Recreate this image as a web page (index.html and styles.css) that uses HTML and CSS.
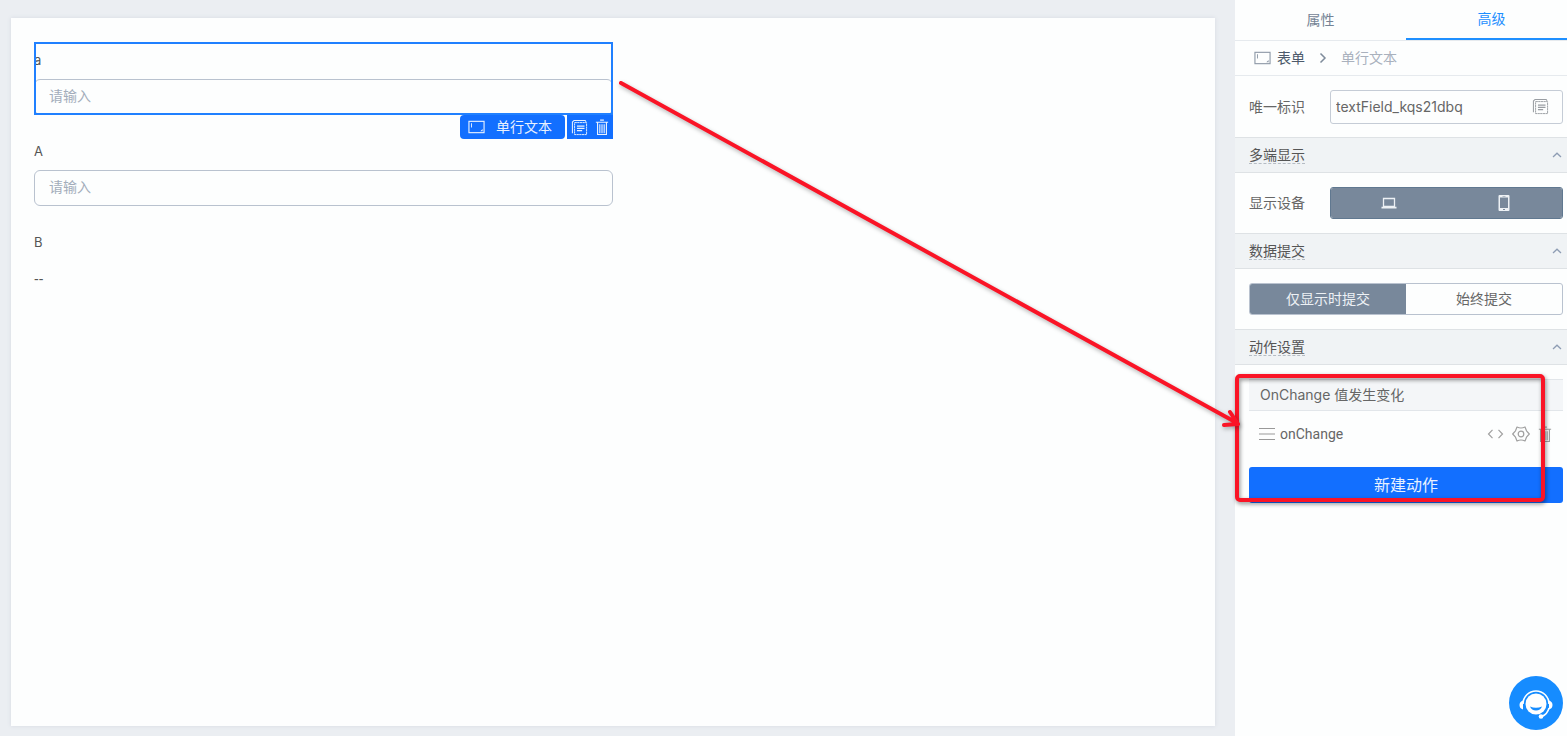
FILE: index.html
```html
<!DOCTYPE html>
<html lang="zh-CN">
<head>
<meta charset="utf-8">
<title>表单设计器</title>
<link rel="stylesheet" href="styles.css">
</head>
<body>
<svg class="symbols" aria-hidden="true">
  <symbol id="icon-field" viewBox="0 0 18 14">
    <rect x="1" y="1" width="16" height="12" fill="none" stroke="currentColor" stroke-width="1.2"/>
    <path d="M3.7 3v4.5" stroke="currentColor" stroke-width="1"/>
    <path d="M15.500 9v2.500h-2.500z" fill="currentColor"/>
  </symbol>
  <symbol id="icon-copy" viewBox="0 0 18 18">
    <path d="M1.5 15V3.2L3.2 1.5H15L16 3" fill="none" stroke="currentColor" stroke-width="1.1"/>
    <rect x="3.8" y="3.8" width="12.7" height="12.7" fill="none" stroke="currentColor" stroke-width="1" stroke-dasharray="2.4 .4"/>
    <path d="M6.3 7.5h8M6.3 9.9h8M6.3 12.3h5.5" stroke="currentColor" stroke-width="1.3"/>
  </symbol>
  <symbol id="icon-trash" viewBox="0 0 14 18">
    <path d="M.5 3.5h13M5 1.2h4M2.3 4v12.4h9.4V4M4.7 5.5v9.5M7 5.5v9.5M9.3 5.5v9.5" fill="none" stroke="currentColor" stroke-width="1.2"/>
  </symbol>
  <symbol id="icon-up" viewBox="0 0 10 6">
    <path d="M1 5l4-3.8L9 5" fill="none" stroke="currentColor" stroke-width="1.3"/>
  </symbol>
</svg>

<div class="app">
  <main class="stage">
    <form class="paper">
      <div class="field field-selected">
        <label class="field-label" for="field-a">a</label>
        <input class="field-input" id="field-a" type="text" placeholder="请输入">
        <div class="field-tools">
          <button class="tool-name" type="button"><svg class="icon-field"><use href="#icon-field"/></svg>单行文本</button>
          <div class="tool-actions">
            <button class="icon-button" type="button" aria-label="复制"><svg class="icon-copy"><use href="#icon-copy"/></svg></button>
            <button class="icon-button" type="button" aria-label="删除"><svg class="icon-trash"><use href="#icon-trash"/></svg></button>
          </div>
        </div>
      </div>
      <div class="field">
        <label class="field-label" for="field-A">A</label>
        <input class="field-input" id="field-A" type="text" placeholder="请输入">
      </div>
      <div class="field">
        <span class="field-label">B</span>
        <span class="field-value">--</span>
      </div>
    </form>
  </main>

  <aside class="panel">
    <div class="tabs" role="tablist">
      <button class="tab" type="button" role="tab" aria-selected="false">属性</button>
      <button class="tab tab-active" type="button" role="tab" aria-selected="true">高级</button>
    </div>
    <nav class="crumbs">
      <a class="crumb-link" href="#form"><svg class="icon-field"><use href="#icon-field"/></svg>表单</a>
      <svg class="crumb-sep" viewBox="0 0 8 12"><path d="M1.5 1.5L6 6l-4.5 4.5" fill="none" stroke="currentColor" stroke-width="1.5"/></svg>
      <span class="crumb-current">单行文本</span>
    </nav>
    <div class="row row-id">
      <label class="row-label" for="unique-id">唯一标识</label>
      <div class="id-box">
        <input class="id-input" id="unique-id" type="text" value="textField_kqs21dbq">
        <button class="icon-button" type="button" aria-label="复制标识"><svg class="icon-copy"><use href="#icon-copy"/></svg></button>
      </div>
    </div>

    <button class="section-head" type="button"><span class="section-title">多端显示</span><svg class="icon-up"><use href="#icon-up"/></svg></button>
    <div class="row">
      <span class="row-label">显示设备</span>
      <div class="segments">
        <button class="segment segment-on" type="button" aria-label="电脑">
          <svg class="icon-device" viewBox="0 0 16 16"><path d="M2.5 3.5h11v8h-11z" fill="none" stroke="currentColor" stroke-width="1.3"/><path d="M.5 12.7h15" stroke="currentColor" stroke-width="1.8"/></svg>
        </button>
        <button class="segment segment-on" type="button" aria-label="手机">
          <svg class="icon-device" viewBox="0 0 16 16"><path fill-rule="evenodd" d="M3.5 0h9q1 0 1 1v14q0 1-1 1h-9q-1 0-1-1V1q0-1 1-1zM4 2.5v10.5h8V2.5zM7 14h2v1H7zM6.5 1h3v.5h-3z" fill="currentColor"/></svg>
        </button>
      </div>
    </div>

    <button class="section-head" type="button"><span class="section-title">数据提交</span><svg class="icon-up"><use href="#icon-up"/></svg></button>
    <div class="row">
      <div class="segments">
        <button class="segment segment-on" type="button">仅显示时提交</button>
        <button class="segment" type="button">始终提交</button>
      </div>
    </div>

    <button class="section-head" type="button"><span class="section-title">动作设置</span><svg class="icon-up"><use href="#icon-up"/></svg></button>
    <section class="actions">
      <h3 class="event-name">OnChange 值发生变化</h3>
      <div class="action-item">
        <svg class="icon-drag" viewBox="0 0 16 12"><path d="M0 .5h16M0 6h16M0 11.500h16" stroke="currentColor"/></svg>
        <span class="action-name">onChange</span>
        <button class="icon-button" type="button" aria-label="编辑代码"><svg class="icon-code" viewBox="0 0 16 10"><path d="M5 .8L1 5l4 4.2M11 .8L15 5l-4 4.2" fill="none" stroke="currentColor" stroke-width="1.2"/></svg></button>
        <button class="icon-button" type="button" aria-label="设置"><svg class="icon-gear" viewBox="0 0 18 18"><path d="M5 2Q9 4 13 2L14.500 5.800 17.300 9 14.500 12.200 13 16Q9 14 5 16L3.500 12.200.7 9 3.500 5.800z" fill="none" stroke="currentColor" stroke-width="1.200" stroke-linejoin="round"/><circle cx="9" cy="9" r="2.800" fill="none" stroke="currentColor" stroke-width="1.200"/></svg></button>
        <button class="icon-button" type="button" aria-label="删除动作"><svg class="icon-trash"><use href="#icon-trash"/></svg></button>
      </div>
      <button class="add-action" type="button">新建动作</button>
      <div class="callout-box"></div>
    </section>
  </aside>
</div>

<svg class="callout-arrow" viewBox="0 0 640 360" aria-hidden="true">
  <path d="M11 8L627 348M620 337l8 12-14 1" fill="none" stroke="#fa1426" stroke-width="4" stroke-linecap="round" stroke-linejoin="round"/>
</svg>

<button class="support" type="button" aria-label="在线客服">
  <svg class="icon-support" viewBox="0 0 54 54">
    <path d="M14 28a13 13 0 0 1 26 0" fill="none" stroke="#fff" stroke-width="1.6"/>
    <circle cx="27" cy="28" r="10.5" fill="#fff"/>
    <path d="M21 30.5q6 2.6 12 0-1.5 4-6 4t-6-4z" fill="#168cff"/>
    <path d="M14 24.5v9q-3.5-1-3.500-4.500t3.500-4.500zM40 24.500v9q3.500-1 3.500-4.500t-3.500-4.500z" fill="#fff"/>
    <path d="M40 32q-1.500 6-7 8.500" fill="none" stroke="#fff" stroke-width="1.500"/>
    <circle cx="32" cy="40.500" r="2.300" fill="#fff"/>
  </svg>
</button>
</body>
</html>
```
FILE: styles.css
```css
* { box-sizing: border-box; }

body {
  margin: 0;
  background: #ebeef2;
  color: #666;
  font: 14px/20px Inter, "Noto Sans CJK SC", sans-serif;
}

button, input { font: inherit; color: inherit; }

button {
  display: flex;
  align-items: center;
  justify-content: center;
  padding: 0;
  border: 0;
  background: none;
  cursor: pointer;
}

.symbols { display: none; }

.app { display: flex; min-height: 100vh; }

.stage { display: flex; flex: 1; padding: 18px 20px 10px 11px; }

.paper {
  display: grid;
  flex: 1;
  grid-template-columns: 1fr 1fr;
  align-content: start;
  row-gap: 18px;
  padding: 24px 23px;
  background: #fdfefe;
  box-shadow: 0 0 4px #d5d9e2;
}

.field { position: relative; display: flex; flex-direction: column; grid-column: 1; }

.field-selected::after {
  content: "";
  position: absolute;
  inset: 0;
  border: 2px solid #2080ff;
  pointer-events: none;
}

.field-label { line-height: 37px; font-size: 13px; color: #555; }
.field-value { line-height: 36px; color: #555; font-family: "Liberation Sans", sans-serif; }

.field-input {
  width: 100%;
  height: 36px;
  padding: 0 14px 4px;
  border: 1px solid #b9c2cf;
  border-radius: 6px;
  background: none;
}

.field-input::placeholder { color: #a3adbb; }

.field-tools {
  position: absolute;
  top: 100%;
  right: 0;
  display: flex;
  gap: 2px;
  color: #e8f1ff;
}

.tool-name { gap: 11px; height: 24px; padding: 0 13px 0 8px; border-radius: 4px; background: #126fff; }
.tool-actions { display: flex; gap: 7px; height: 24px; padding: 0 4px; background: #126fff; }

.icon-field { width: 17px; height: 14px; }
.icon-copy { width: 17px; height: 17px; }
.icon-trash { width: 14px; height: 17px; }
.icon-up { width: 10px; height: 6px; color: #8e9db4; }
.icon-drag { width: 16px; height: 12px; color: #999; }
.icon-code { width: 17px; height: 10px; }
.icon-gear { width: 18px; height: 18px; }
.icon-device { width: 16px; height: 16px; }

.panel { flex: 0 0 332px; min-width: 0; background: #fdfefe; }

.tabs { display: flex; height: 41px; border-bottom: 1px solid #e6eaee; overflow: hidden; }
.tab { flex: 0 0 171px; height: 40px; color: #748395; }
.tab-active { border-bottom: 2px solid #1e8fff; color: #1e8fff; }

.crumbs {
  display: flex;
  align-items: center;
  gap: 14px;
  height: 35px;
  padding-left: 19px;
  border-bottom: 1px solid #e6eaee;
}

.crumb-link { display: flex; align-items: center; gap: 6px; color: #4c5a6b; text-decoration: none; }
.crumb-link .icon-field { color: #8f9aa8; }
.crumb-sep { width: 8px; height: 12px; color: #7f8b9b; }
.crumb-current { color: #a9b1bd; }

.row { display: flex; align-items: center; height: 60px; padding: 0 4px 0 14px; }
.row-id { height: 61px; }
.row-label { flex: 0 0 81px; }

.id-box {
  display: flex;
  flex: 1;
  min-width: 0;
  height: 34px;
  padding-right: 13px;
  border: 1px solid #c5ccd6;
  border-radius: 3px;
  color: #999da2;
}

.id-input { flex: 1; min-width: 0; padding: 0 5px; border: 0; background: none; color: #666; }

.section-head {
  justify-content: space-between;
  width: 100%;
  height: 36px;
  padding: 0 5px 0 14px;
  border-top: 1px solid #dee2e5;
  border-bottom: 1px solid #dee2e5;
  background: #f0f3f5;
}

.section-title { border-bottom: 1px dashed #b5bcc4; line-height: 16px; color: #555; }

.segments {
  display: flex;
  flex: 1;
  height: 32px;
  border: 1px solid #b9c2cf;
  border-radius: 3px;
  overflow: hidden;
}

.segment { flex: 1; }
.segment-on { background: #78889b; color: #edf1f5; }
.segments:has(.segment-on:last-child) { border-color: #607890; }

.actions { position: relative; padding: 14px 4px 0 14px; }

.event-name {
  margin: 0;
  padding: 0 11px;
  border-top: 1px solid #e2e6ea;
  border-bottom: 1px solid #e2e6ea;
  background: #f4f6f8;
  font-size: 14px;
  font-weight: 400;
  line-height: 30px;
}

.action-item { display: flex; align-items: center; gap: 8px; height: 46px; padding: 0 11px 0 10px; color: #a0a0a0; }
.action-name { flex: 1; margin-left: -3px; color: #666; font-family: Roboto, sans-serif; }

.add-action {
  width: 100%;
  height: 36px;
  margin-top: 10px;
  border-radius: 3px;
  background: #126fff;
  color: #e8f1ff;
  font-size: 16px;
}

.callout-box {
  position: absolute;
  top: 9px;
  left: 0;
  right: 22px;
  bottom: 1px;
  border: 4px solid #fa1426;
  border-radius: 5px;
  filter: drop-shadow(1px 2px 2px rgba(0, 0, 0, .45));
  pointer-events: none;
}

.callout-arrow {
  position: absolute;
  top: 75px;
  right: 317px;
  width: 640px;
  height: 360px;
  filter: drop-shadow(1px 2px 2px rgba(0, 0, 0, .3));
  pointer-events: none;
}

.support {
  position: fixed;
  right: 4px;
  bottom: 6px;
  width: 54px;
  height: 54px;
  border-radius: 50%;
  background: #168cff;
}

.icon-support { width: 54px; height: 54px; }
```
